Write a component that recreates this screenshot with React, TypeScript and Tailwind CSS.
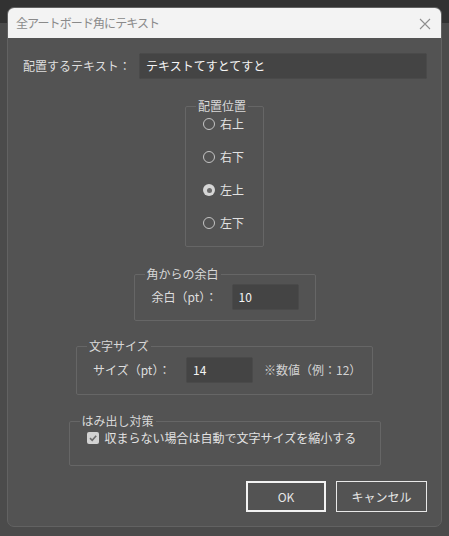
import React from "react";

const font = { fontFamily: '"Noto Sans CJK JP", "Noto Sans", sans-serif' };

function Radio({ label, checked }: { label: string; checked?: boolean }) {
  return (
    <label className="flex h-[20px] items-center gap-[5px] text-[12px] text-[#e2e2e2]">
      {checked ? (
        <span className="flex h-[12px] w-[12px] items-center justify-center rounded-full bg-[#d6d6d6]">
          <span className="h-[5px] w-[5px] rounded-full bg-[#6a6a6a]" />
        </span>
      ) : (
        <span className="h-[12px] w-[12px] rounded-full border border-[#c4c4c4]" />
      )}
      <span>{label}</span>
    </label>
  );
}

function Group({
  title,
  className,
  children,
}: {
  title: string;
  className: string;
  children: React.ReactNode;
}) {
  return (
    <fieldset className={`rounded-[2px] border border-[#666666] ${className}`}>
      <legend className="ml-[10px] whitespace-nowrap px-[2px] text-[12px] leading-[16px] text-[#d8d8d8]">
        {title}
      </legend>
      {children}
    </fieldset>
  );
}

function Field({ value, className }: { value: string; className: string }) {
  return (
    <div
      className={`flex h-[26px] items-center rounded-[2px] border border-[#4a4a4a] bg-[#444444] px-[6px] text-[12px] text-[#f4f4f4] ${className}`}
    >
      {value}
    </div>
  );
}

export default function App() {
  return (
    <div className="relative h-[536px] w-[449px] overflow-hidden bg-[#4b4b4b]" style={font}>
      <div className="h-[23px] bg-[#323232]" />
      <div className="absolute left-[7px] top-[7px] flex h-[520px] w-[435px] flex-col overflow-hidden rounded-[7px] border border-[#626262] bg-[#535353]">
        <div className="flex h-[30px] shrink-0 items-center justify-between bg-[#f3f3f3] pl-[8px] pr-[10px]">
          <span className="text-[12px] tracking-[-0.9px] text-[#8a8a8a]">全アートボード角にテキスト</span>
          <svg width="12" height="12" viewBox="0 0 12 12" className="mt-[1px]">
            <path d="M1 1 L11 11 M11 1 L1 11" stroke="#8e8e8e" strokeWidth="1.1" fill="none" />
          </svg>
        </div>

        <div className="flex flex-col items-center">
          <div className="mt-[15px] flex w-full items-center pl-[15px]">
            <span className="w-[116px] text-[12px] text-[#dedede]">配置するテキスト：</span>
            <Field value="テキストてすとてすと" className="w-[288px]" />
          </div>

          <Group title="配置位置" className="mt-[19px] w-[79px]">
            <div className="flex flex-col gap-[13px] pb-[13px] pl-[17px]">
              <Radio label="右上" />
              <Radio label="右下" />
              <Radio label="左上" checked />
              <Radio label="左下" />
            </div>
          </Group>

          <Group title="角からの余白" className="mt-[19px] w-[182px]">
            <div className="mt-[2px] flex items-center pb-[10px] pl-[17px]">
              <span className="w-[80px] text-[12px] text-[#dedede]">余白（pt）：</span>
              <Field value="10" className="w-[67px]" />
            </div>
          </Group>

          <Group title="文字サイズ" className="mt-[17px] w-[297px]">
            <div className="mt-[3px] flex items-center pb-[11px] pl-[16px]">
              <span className="w-[93px] text-[12px] text-[#dedede]">サイズ（pt）：</span>
              <Field value="14" className="w-[67px]" />
              <span className="ml-[11px] text-[12px] text-[#d2d2d2]">※数値（例：12）</span>
            </div>
          </Group>

          <Group title="はみ出し対策" className="mt-[18px] w-[312px]">
            <label className="flex items-center gap-[6px] pb-[18px] pl-[17px] text-[12px] text-[#e2e2e2]">
              <span className="flex h-[12px] w-[12px] items-center justify-center rounded-[2px] bg-[#d2d2d2]">
                <svg width="10" height="10" viewBox="0 0 10 10">
                  <path d="M2 5.2 L4.2 7.3 L8.2 2.8" stroke="#6c6c6c" strokeWidth="1.6" fill="none" />
                </svg>
              </span>
              <span>収まらない場合は自動で文字サイズを縮小する</span>
            </label>
          </Group>

          <div className="mt-[15px] flex w-full justify-end gap-[10px] pr-[14px]">
            <button className="h-[31px] w-[80px] border-2 border-[#f2f2f2] text-[12px] text-[#e6e6e6]">
              OK
            </button>
            <button className="h-[31px] w-[91px] border border-[#e8e8e8] text-[12px] text-[#e6e6e6]">
              キャンセル
            </button>
          </div>
        </div>
      </div>
    </div>
  );
}
